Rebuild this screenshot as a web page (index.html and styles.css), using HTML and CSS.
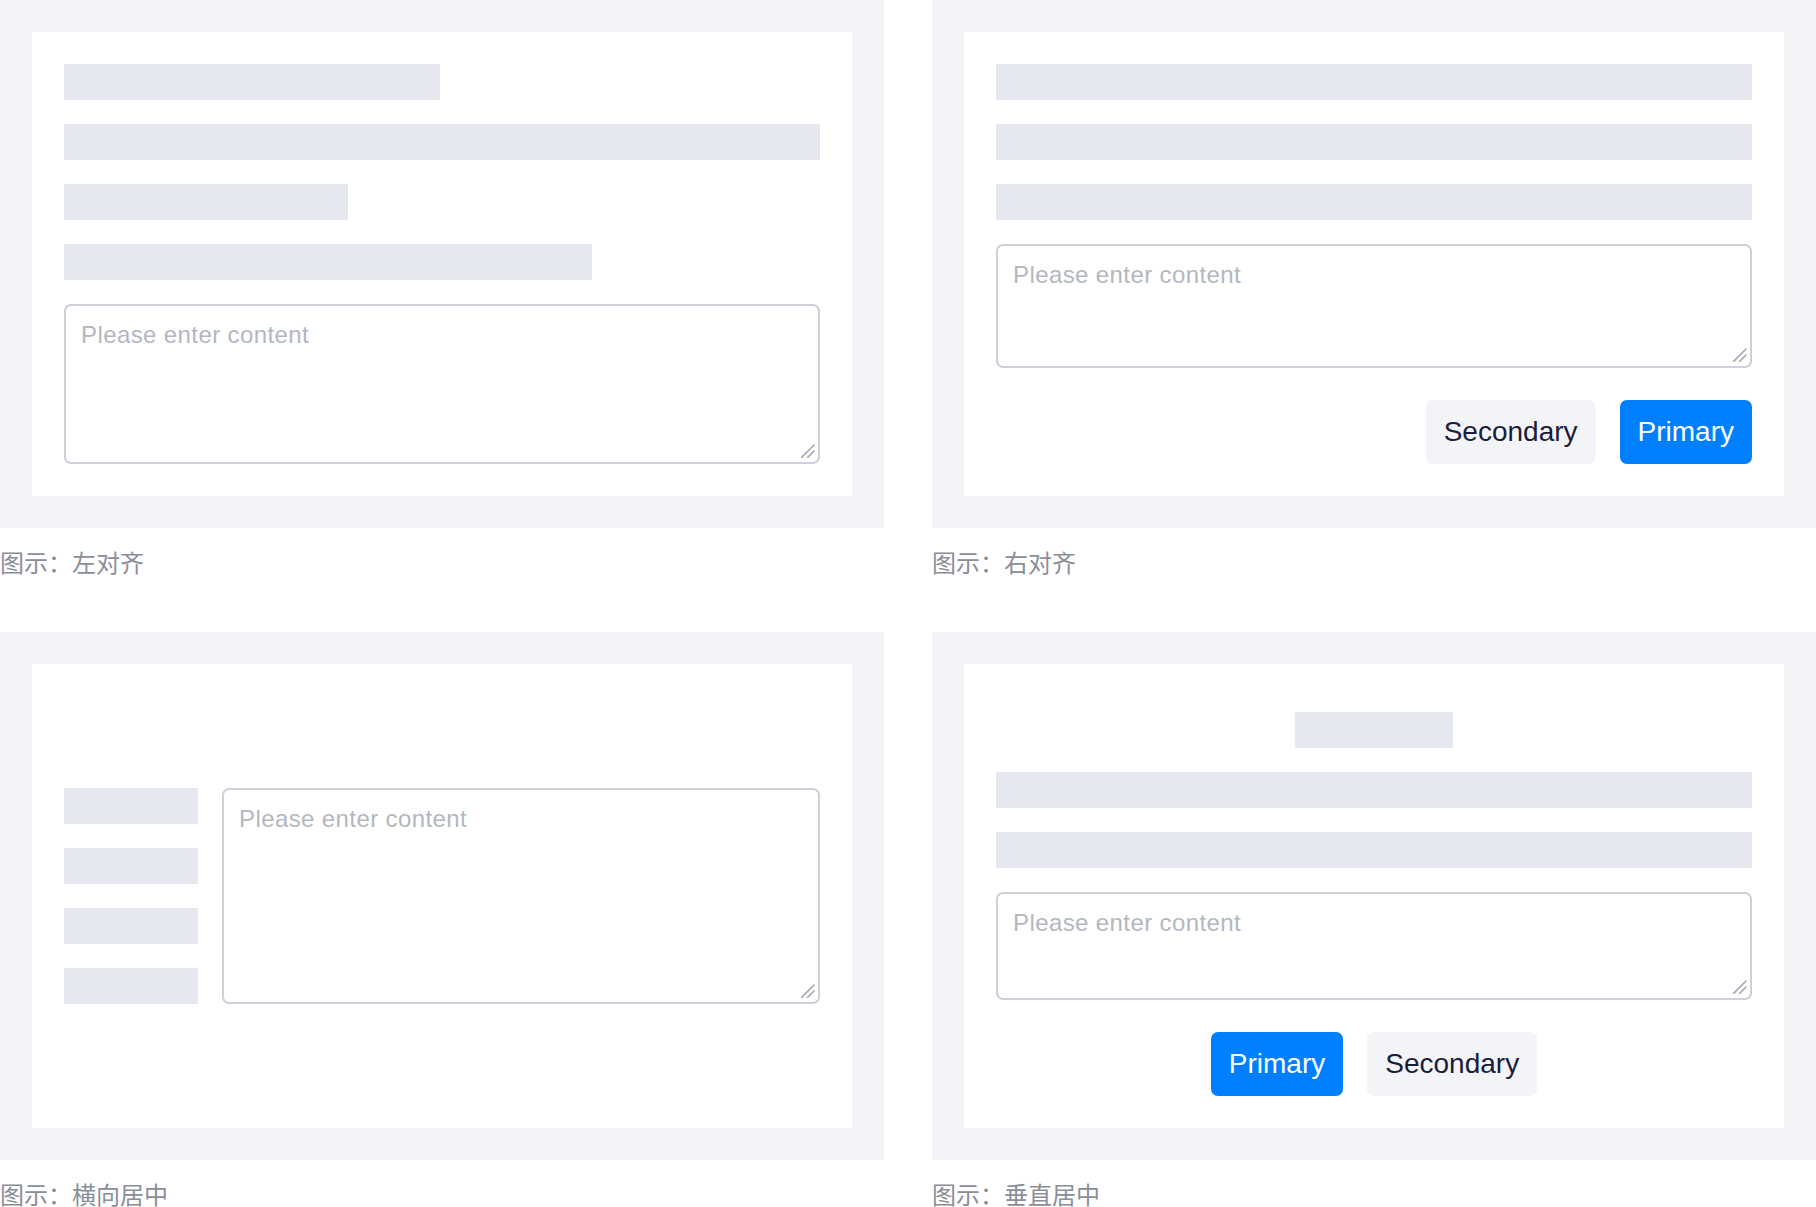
FILE: index.html
```html
<!DOCTYPE html>
<html lang="zh-CN">
<head>
<meta charset="utf-8">
<title>Alignment</title>
<link rel="stylesheet" href="styles.css">
</head>
<body>
<div class="grid">
  <figure class="figure">
    <div class="panel">
      <div class="card card-left">
        <div class="bar w376"></div>
        <div class="bar"></div>
        <div class="bar w284"></div>
        <div class="bar w528"></div>
        <div class="field-wrap grow">
          <textarea class="field" placeholder="Please enter content"></textarea>
          <svg class="grip" viewBox="0 0 14 14" width="14" height="14"><path d="M0.5 13.5 L13 1 M6.5 13.5 L13 7" /></svg>
        </div>
      </div>
    </div>
    <figcaption class="caption">图示：左对齐</figcaption>
  </figure>

  <figure class="figure">
    <div class="panel">
      <div class="card card-right">
        <div class="bar"></div>
        <div class="bar"></div>
        <div class="bar"></div>
        <div class="field-wrap grow">
          <textarea class="field" placeholder="Please enter content"></textarea>
          <svg class="grip" viewBox="0 0 14 14" width="14" height="14"><path d="M0.5 13.5 L13 1 M6.5 13.5 L13 7" /></svg>
        </div>
        <div class="actions actions-end">
          <button class="btn btn-secondary" type="button">Secondary</button>
          <button class="btn btn-primary" type="button">Primary</button>
        </div>
      </div>
    </div>
    <figcaption class="caption">图示：右对齐</figcaption>
  </figure>

  <figure class="figure">
    <div class="panel">
      <div class="card card-hcenter">
        <div class="hrow">
          <div class="labels">
            <div class="bar"></div>
            <div class="bar"></div>
            <div class="bar"></div>
            <div class="bar"></div>
          </div>
          <div class="field-wrap hfield">
            <textarea class="field" placeholder="Please enter content"></textarea>
            <svg class="grip" viewBox="0 0 14 14" width="14" height="14"><path d="M0.5 13.5 L13 1 M6.5 13.5 L13 7" /></svg>
          </div>
        </div>
      </div>
    </div>
    <figcaption class="caption">图示：横向居中</figcaption>
  </figure>

  <figure class="figure">
    <div class="panel">
      <div class="card card-vcenter">
        <div class="bar w158"></div>
        <div class="bar"></div>
        <div class="bar"></div>
        <div class="field-wrap vfield">
          <textarea class="field" placeholder="Please enter content"></textarea>
          <svg class="grip" viewBox="0 0 14 14" width="14" height="14"><path d="M0.5 13.5 L13 1 M6.5 13.5 L13 7" /></svg>
        </div>
        <div class="actions actions-center">
          <button class="btn btn-primary" type="button">Primary</button>
          <button class="btn btn-secondary" type="button">Secondary</button>
        </div>
      </div>
    </div>
    <figcaption class="caption">图示：垂直居中</figcaption>
  </figure>
</div>
</body>
</html>
```

FILE: styles.css
```css
* { box-sizing: border-box; }

html, body {
  margin: 0;
  padding: 0;
  background: #ffffff;
  font-family: "Liberation Sans", "Noto Sans CJK SC", sans-serif;
}

.grid {
  display: grid;
  grid-template-columns: 884px 884px;
  column-gap: 48px;
  row-gap: 54px;
}

.figure {
  margin: 0;
}

.panel {
  background: #f3f4f8;
  padding: 32px;
  height: 528px;
}

.card {
  background: #ffffff;
  height: 464px;
  padding: 32px;
  display: flex;
  flex-direction: column;
  gap: 24px;
}

.bar {
  height: 36px;
  background: #e5e8ef;
  flex: none;
  width: 100%;
}

.w376 { width: 376px; }
.w284 { width: 284px; }
.w528 { width: 528px; }
.w158 { width: 158px; align-self: center; }

.field-wrap {
  position: relative;
  width: 100%;
}

.field {
  display: block;
  width: 100%;
  height: 100%;
  margin: 0;
  border: 2px solid #cdd0d8;
  border-radius: 7px;
  padding: 13px 15px;
  font-family: "Liberation Sans", sans-serif;
  font-size: 24px;
  line-height: 32px;
  letter-spacing: 0.4px;
  color: #1c1c3c;
  background: #ffffff;
  resize: none;
  outline: none;
}

.field::placeholder {
  color: #b3b7c1;
}

.grip {
  position: absolute;
  right: 5px;
  bottom: 6px;
  fill: none;
  stroke: #a6aab5;
  stroke-width: 1.7;
  stroke-linecap: round;
}

.grow {
  flex: 1 1 auto;
  min-height: 0;
}

.actions {
  display: flex;
  gap: 24px;
  margin-top: 8px;
}

.actions-end { justify-content: flex-end; }
.actions-center { justify-content: center; }

.btn {
  height: 64px;
  padding: 0 18px;
  border: none;
  border-radius: 7px;
  font-family: "Liberation Sans", sans-serif;
  font-size: 28px;
  line-height: 64px;
  cursor: pointer;
}

.btn-primary {
  background: #0080ff;
  color: #ffffff;
}

.btn-secondary {
  background: #f3f4f8;
  color: #1c1c3c;
}

.card-hcenter {
  justify-content: center;
}

.hrow {
  display: flex;
  gap: 24px;
  align-items: stretch;
}

.labels {
  width: 134px;
  flex: none;
  display: flex;
  flex-direction: column;
  gap: 24px;
}

.hfield {
  flex: 1 1 auto;
  height: 216px;
  width: auto;
}

.card-vcenter {
  padding-top: 48px;
}

.vfield {
  height: 108px;
  flex: none;
}

.caption {
  margin-top: 18px;
  font-family: "Noto Sans CJK SC", sans-serif;
  font-size: 24px;
  line-height: 32px;
  color: #8a8e99;
}
```
